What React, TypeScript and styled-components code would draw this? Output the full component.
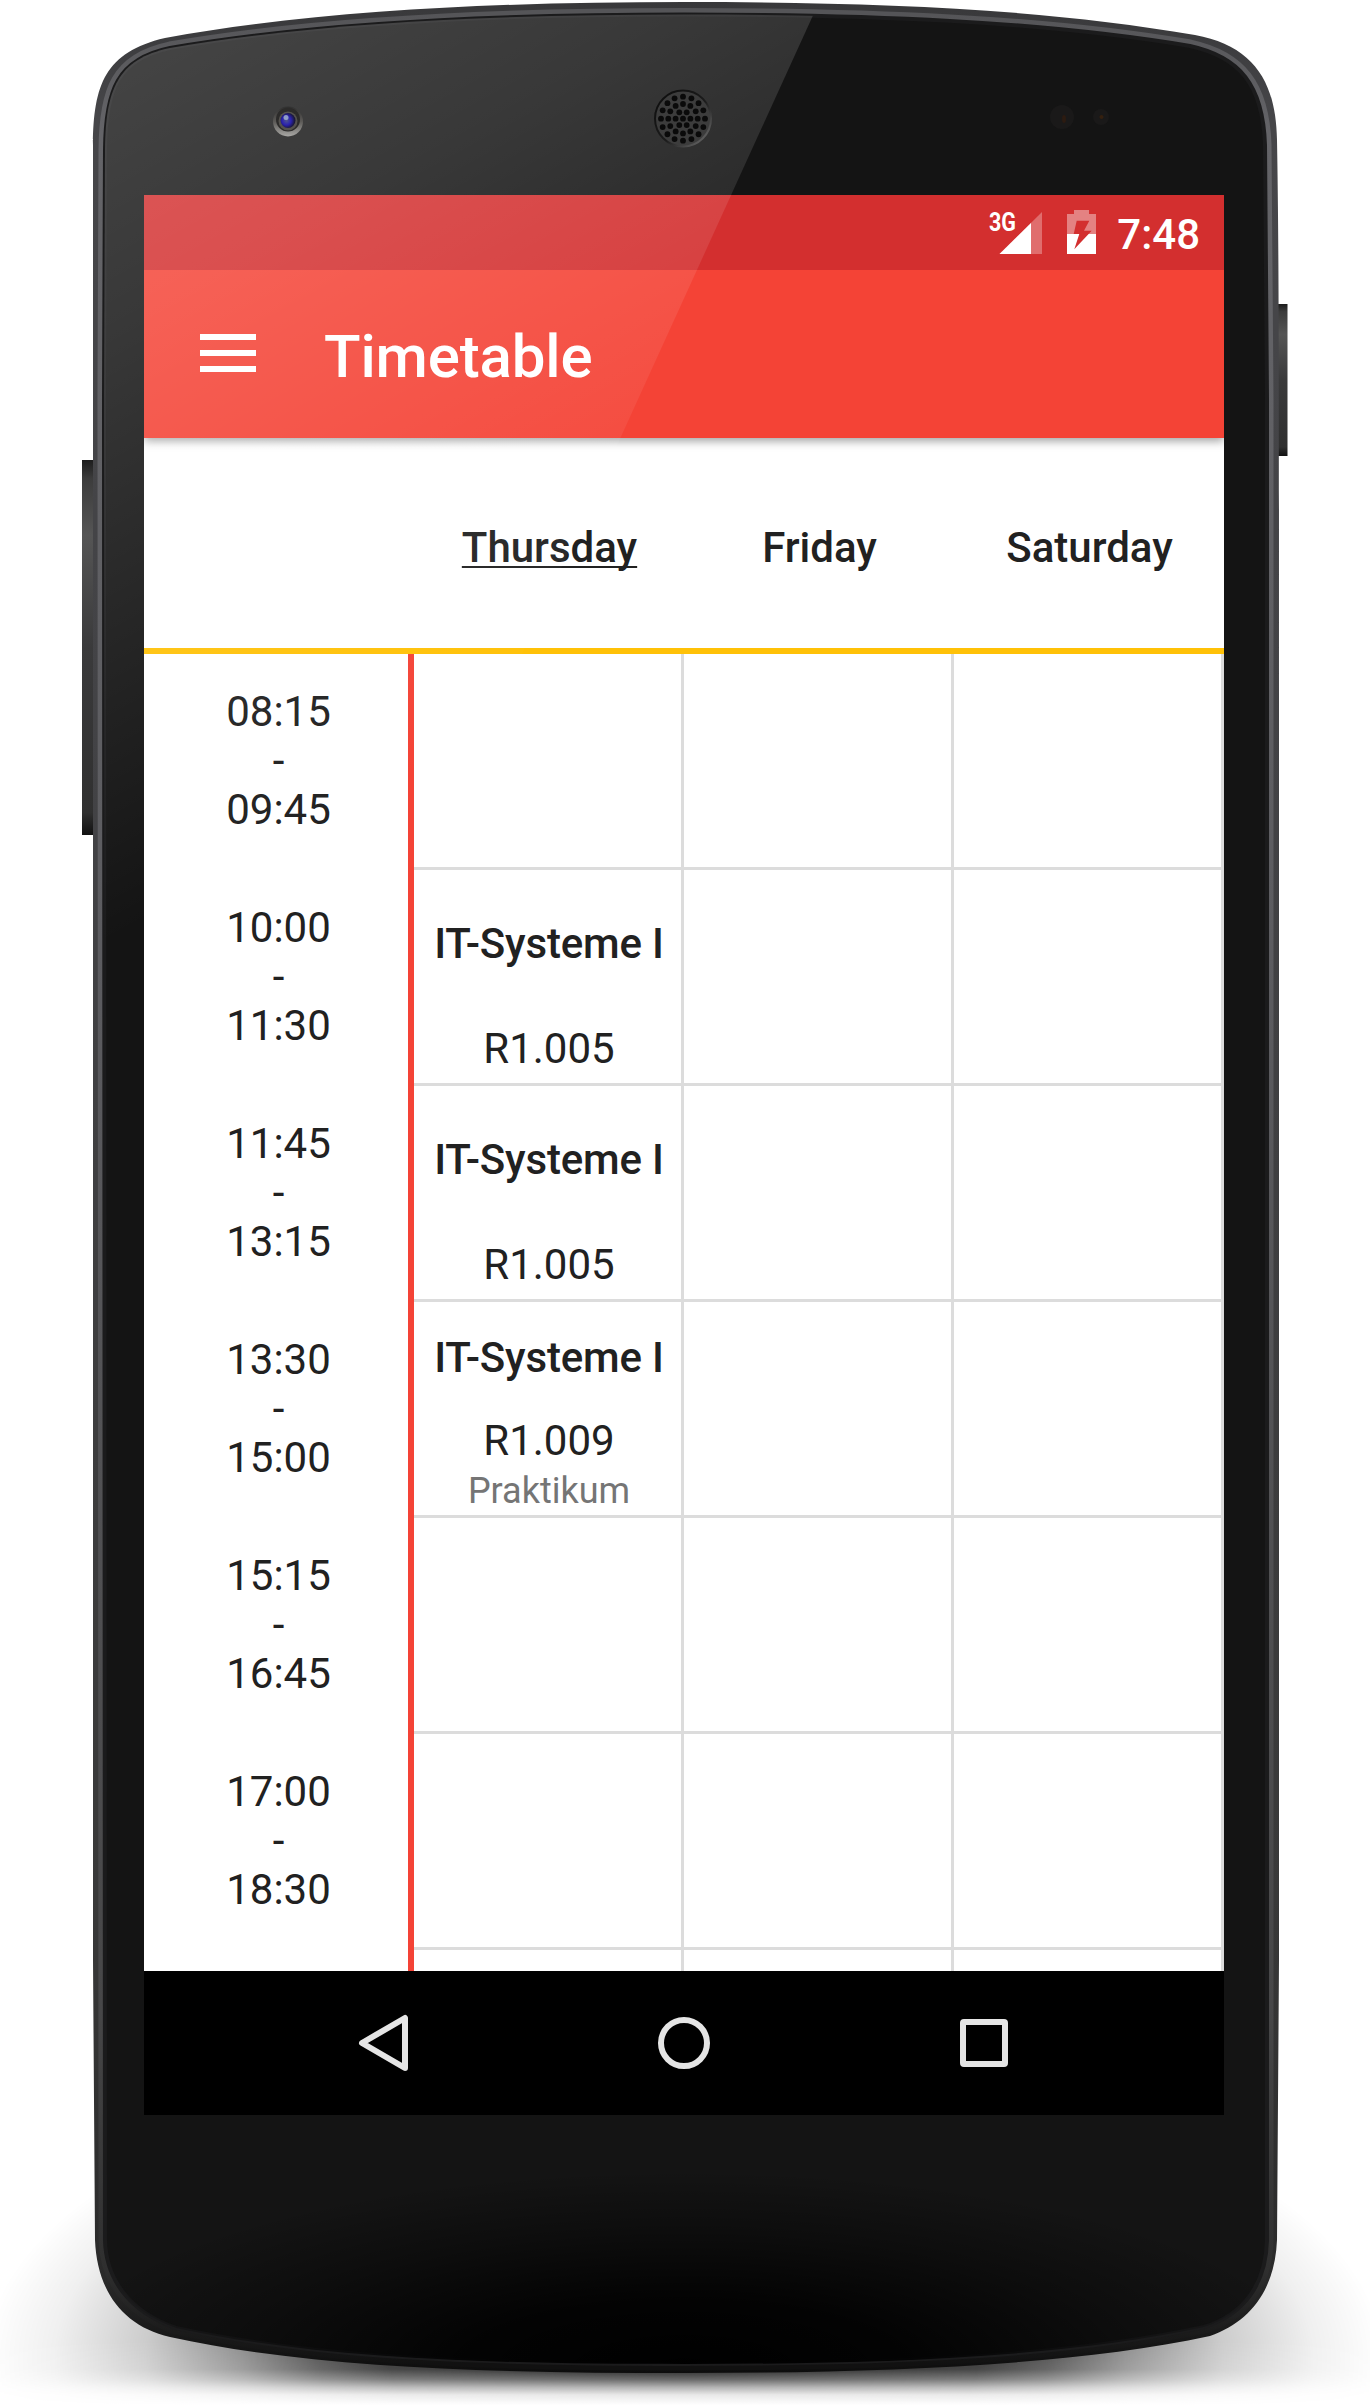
import React from "react";
import styled, { createGlobalStyle } from "styled-components";

const Global = createGlobalStyle`
  body { margin: 0; background: #fff; }
  * { box-sizing: border-box; }
`;

const Stage = styled.main`
  position: relative;
  width: 1370px;
  height: 2405px;
  overflow: hidden;
  padding: 195px 146px 290px 144px;
  font-family: Roboto, "Liberation Sans", sans-serif;
  color: #212121;
`;

const Art = styled.svg<{ $top?: boolean }>`
  position: absolute;
  inset: 0;
  z-index: ${(p) => (p.$top ? 2 : 0)};
  pointer-events: none;
`;

const Screen = styled.section`
  position: relative;
  z-index: 1;
  width: 1080px;
  height: 1920px;
  display: flex;
  flex-direction: column;
  background: #fff;
  overflow: hidden;
`;

const StatusBar = styled.div`
  position: relative;
  z-index: 1;
  height: 75px;
  flex: none;
  display: flex;
  align-items: center;
  justify-content: flex-end;
  padding-right: 24px;
  background: #d32f2f;
  color: #fff;
`;

const StatusIcons = styled.svg`
  display: block;
  overflow: visible;
  margin-right: 19px;
`;

const Clock = styled.span`
  font-size: 42px;
  font-weight: 500;
  line-height: 75px;
  padding-top: 4px;
`;

const Toolbar = styled.header`
  position: relative;
  height: 168px;
  flex: none;
  display: flex;
  align-items: center;
  padding-left: 56px;
  background: #f44336;
  box-shadow: 0 3px 9px rgba(0, 0, 0, 0.38);
`;

const Menu = styled.div`
  width: 56px;
  display: grid;
  gap: 10px;
  margin-top: -2px;
`;

const MenuBar = styled.i`
  height: 6px;
  background: #fff;
`;

const Title = styled.h1`
  margin: 5px 0 0 68px;
  font-size: 60px;
  font-weight: 500;
  line-height: 70px;
  letter-spacing: -0.15px;
  color: #fff;
`;

const DayRow = styled.div`
  height: 216px;
  flex: none;
  display: grid;
  grid-template-columns: 270px 270px 270px 270px;
  border-bottom: 6px solid #ffc107;
`;

const Day = styled.div<{ $current?: boolean }>`
  display: flex;
  align-items: center;
  justify-content: center;
  padding: 8px 0 0 1px;
  font-size: 42px;
  font-weight: 500;
  text-decoration: ${(p) => (p.$current ? "underline" : "none")};
  text-decoration-thickness: 2px;
  text-underline-offset: 4px;
  text-decoration-skip-ink: none;
`;

const Rows = styled.div`
  flex: 1;
  min-height: 0;
  overflow: hidden;
`;

const Row = styled.div`
  height: 216px;
  display: grid;
  grid-template-columns: 270px 270px 270px 270px;
`;

const Time = styled.div`
  border-right: 6px solid #f44336;
  padding: 33px 0 0 5px;
  font-size: 42px;
  line-height: 49px;
  text-align: center;
`;

const Cell = styled.div`
  display: flex;
  flex-direction: column;
  align-items: center;
  padding-left: 3px;
  border-right: 3px solid #dcdcdc;
  border-bottom: 3px solid #dcdcdc;
  white-space: nowrap;
  font-size: 42px;
  line-height: 49px;
`;

const Course = styled.strong<{ $compact: boolean }>`
  font-weight: 500;
  letter-spacing: -0.17px;
  padding-top: ${(p) => (p.$compact ? "31px" : "49px")};
`;

const Room = styled.span<{ $compact: boolean }>`
  padding-top: ${(p) => (p.$compact ? "34px" : "56px")};
`;

const Kind = styled.span`
  font-size: 36px;
  line-height: 42px;
  margin-top: 5px;
  color: #757575;
`;

const NavBar = styled.nav`
  height: 144px;
  flex: none;
  display: flex;
  align-items: center;
  justify-content: center;
  background: #000;
`;

type Lesson = { course: string; room: string; kind?: string };

const slots: { from: string; to: string; lesson?: Lesson }[] = [
  { from: "08:15", to: "09:45" },
  { from: "10:00", to: "11:30", lesson: { course: "IT-Systeme I", room: "R1.005" } },
  { from: "11:45", to: "13:15", lesson: { course: "IT-Systeme I", room: "R1.005" } },
  { from: "13:30", to: "15:00", lesson: { course: "IT-Systeme I", room: "R1.009", kind: "Praktikum" } },
  { from: "15:15", to: "16:45" },
  { from: "17:00", to: "18:30" },
  { from: "", to: "" },
];

const outer =
  "M93 145 C93.5 85 105 52 165 38 C320 10 500 2 684 2 C868 2 1040 8 1195 35 C1254 46 1276 82 1277 140 C1279 250 1279 400 1279 700 L1279 1960 L1277 2240 C1275 2290 1250 2322 1210 2336 C1070 2366 880 2373 684 2373 C490 2373 310 2368 170 2337 C122 2326 97 2290 95 2240 L93 1960 Z";
const inner =
  "M105 150 C105.500 90 117 59 170 48 C320 22 500 14.500 684 14.500 C868 14.500 1040 21 1190 46 C1240 57 1263 85 1265 145 L1267 400 L1267 2240 C1266 2285 1243 2315 1204 2327 C1060 2358 880 2364 684 2364 C490 2364 320 2359 176 2328 C130 2312 106 2280 105 2240 L104 400 Z";

const rings = [
  { n: 1, r: 0 },
  { n: 6, r: 7.4 },
  { n: 12, r: 14.7 },
  { n: 16, r: 22 },
];
const holes = rings.flatMap(({ n, r }) =>
  Array.from({ length: n }, (_, i) => {
    const t = (i * Math.PI * 2) / n;
    return { x: 683 + r * Math.cos(t), y: 118.7 + r * Math.sin(t) };
  })
);

function PhoneBody() {
  return (
    <Art width="1370" height="2405" viewBox="0 0 1370 2405">
      <defs>
        <linearGradient id="rim" x1="0" y1="0" x2="0" y2="1">
          <stop offset="0" stopColor="#38383a" />
          <stop offset=".05" stopColor="#464649" />
          <stop offset=".3" stopColor="#434346" />
          <stop offset=".8" stopColor="#393939" />
          <stop offset=".96" stopColor="#2a2a2a" />
          <stop offset="1" stopColor="#0d0d0d" />
        </linearGradient>
        <linearGradient id="bevel" x1="0" y1="0" x2="0" y2="1">
          <stop offset="0" stopColor="#555558" />
          <stop offset=".05" stopColor="#646468" />
          <stop offset=".4" stopColor="#5c5c60" />
          <stop offset=".85" stopColor="#474748" />
          <stop offset=".96" stopColor="#2f2f2f" />
          <stop offset="1" stopColor="#111" />
        </linearGradient>
        <radialGradient id="chin" gradientUnits="userSpaceOnUse" cx="0" cy="0" r="1" gradientTransform="translate(684 2370) scale(640 200)">
          <stop offset="0" stopColor="#000" />
          <stop offset=".35" stopColor="#000" stopOpacity=".85" />
          <stop offset=".7" stopColor="#000" stopOpacity=".35" />
          <stop offset="1" stopColor="#000" stopOpacity="0" />
        </radialGradient>
        <linearGradient id="key" x1="0" y1="0" x2="0" y2="1">
          <stop offset="0" stopColor="#1c1c1c" />
          <stop offset=".05" stopColor="#3c3c3c" />
          <stop offset=".2" stopColor="#555" />
          <stop offset=".5" stopColor="#3a3a3b" />
          <stop offset=".94" stopColor="#303030" />
          <stop offset="1" stopColor="#111" />
        </linearGradient>
        <radialGradient id="floor" gradientUnits="userSpaceOnUse" cx="0" cy="0" r="1" gradientTransform="translate(684 2360) scale(700 310)">
          <stop offset="0" stopColor="#000" stopOpacity="1" />
          <stop offset=".42" stopColor="#000" stopOpacity=".85" />
          <stop offset=".52" stopColor="#000" stopOpacity=".7" />
          <stop offset=".63" stopColor="#000" stopOpacity=".45" />
          <stop offset=".77" stopColor="#000" stopOpacity=".2" />
          <stop offset=".9" stopColor="#000" stopOpacity=".06" />
          <stop offset="1" stopColor="#000" stopOpacity="0" />
        </radialGradient>
        <linearGradient id="fade" gradientUnits="userSpaceOnUse" x1="0" y1="2150" x2="0" y2="2405">
          <stop offset="0" stopColor="#fff" />
          <stop offset=".75" stopColor="#fff" />
          <stop offset=".86" stopColor="#d8d8d8" />
          <stop offset=".9" stopColor="#999" />
          <stop offset=".93" stopColor="#505050" />
          <stop offset=".96" stopColor="#181818" />
          <stop offset="1" stopColor="#000" />
        </linearGradient>
        <mask id="floorMask" maskUnits="userSpaceOnUse" x="0" y="2040" width="1370" height="365">
          <rect y="2040" width="1370" height="365" fill="url(#fade)" />
        </mask>
      </defs>
      <rect y="2040" width="1370" height="365" fill="url(#floor)" mask="url(#floorMask)" />
      <rect x="82" y="460" width="14" height="375" fill="url(#key)" />
      <rect x="1276" y="304" width="11.500" height="152" fill="url(#key)" />
      <path d={outer} fill="url(#rim)" />
      <path d={inner} fill="none" stroke="url(#bevel)" strokeWidth="13" />
      <path d={inner} fill="#141414" stroke="#1b1b1c" strokeWidth="4" />
      <path d={inner} fill="url(#chin)" />
    </Art>
  );
}

function PhoneGloss() {
  return (
    <Art $top width="1370" height="2405" viewBox="0 0 1370 2405">
      <defs>
        <linearGradient id="gloss" gradientUnits="userSpaceOnUse" x1="150" y1="40" x2="520" y2="720">
          <stop offset="0" stopColor="#fff" stopOpacity=".205" />
          <stop offset=".3" stopColor="#fff" stopOpacity=".155" />
          <stop offset="1" stopColor="#fff" stopOpacity="0" />
        </linearGradient>
        <clipPath id="face">
          <path d={inner} />
        </clipPath>
        <radialGradient id="lens" cx=".4" cy=".5" r=".55">
          <stop offset="0" stopColor="#4f5590" />
          <stop offset=".55" stopColor="#2b22b0" />
          <stop offset="1" stopColor="#1a1838" />
        </radialGradient>
        <linearGradient id="ringShade" x1="0" y1="0" x2="0" y2="1">
          <stop offset="0" stopColor="#303030" />
          <stop offset=".5" stopColor="#5c5a57" />
          <stop offset="1" stopColor="#a9a8a5" />
        </linearGradient>
        <linearGradient id="lip" x1="0" y1="0" x2="1" y2="1">
          <stop offset="0" stopColor="#0c0c0c" />
          <stop offset=".55" stopColor="#1c1c1c" />
          <stop offset="1" stopColor="#777" />
        </linearGradient>
      </defs>
      <path d="M90 0 H820 L428 860 L90 1100 Z" fill="url(#gloss)" clipPath="url(#face)" />
      <circle cx="288" cy="121.500" r="15" fill="url(#ringShade)" />
      <circle cx="288" cy="119.500" r="12" fill="#2c2b2a" />
      <circle cx="288" cy="121" r="9.500" fill="#55524e" />
      <circle cx="288" cy="120.500" r="7.500" fill="url(#lens)" />
      <circle cx="286" cy="117.500" r="2.500" fill="#a7b9cf" opacity=".8" />
      <circle cx="683" cy="118.500" r="28" fill="#3c3c3c" stroke="url(#lip)" strokeWidth="2" />
      {holes.map((h, i) => (
        <circle key={i} cx={h.x} cy={h.y} r="2.900" fill="#0a0a0a" />
      ))}
      <circle cx="1062" cy="117" r="12" fill="#1a1919" />
      <ellipse cx="1064" cy="119" rx="2" ry="4" fill="#2c1b11" />
      <circle cx="1101" cy="117" r="8" fill="#1a1919" />
      <circle cx="1101.500" cy="117" r="2" fill="#35200f" />
    </Art>
  );
}

export default function App() {
  return (
    <Stage>
      <Global />
      <PhoneBody />
      <Screen>
        <StatusBar>
          <StatusIcons width="108" height="75" viewBox="0 0 108 75">
            <text x="-1" y="35.500" fill="#fff" fontFamily="Roboto" fontSize="26" fontWeight="700" textLength="27" lengthAdjust="spacingAndGlyphs">3G</text>
            <path d="M9.500 59 L52 17 V59 Z" fill="#fff" opacity=".3" />
            <path d="M9.500 59 L41 28 V59 Z" fill="#fff" />
            <path d="M77 19 H84 V15 H99 V19 H106 V39 H98.600 L101.700 35.700 H94 L99.300 25.700 H86.700 L83.700 39 H77 Z" fill="#fff" opacity=".4" />
            <path d="M77 39 H89.300 L84.300 54.300 L98.600 39 H106 V59 H77 Z" fill="#fff" />
          </StatusIcons>
          <Clock>7:48</Clock>
        </StatusBar>
        <Toolbar>
          <Menu><MenuBar /><MenuBar /><MenuBar /></Menu>
          <Title>Timetable</Title>
        </Toolbar>
        <DayRow>
          <Day />
          <Day $current>Thursday</Day>
          <Day>Friday</Day>
          <Day>Saturday</Day>
        </DayRow>
        <Rows>
          {slots.map((s, i) => (
            <Row key={i}>
              <Time>
                {s.from && (<><div>{s.from}</div><div>-</div><div>{s.to}</div></>)}
              </Time>
              <Cell>
                {s.lesson && (
                  <>
                    <Course $compact={!!s.lesson.kind}>{s.lesson.course}</Course>
                    <Room $compact={!!s.lesson.kind}>{s.lesson.room}</Room>
                    {s.lesson.kind && <Kind>{s.lesson.kind}</Kind>}
                  </>
                )}
              </Cell>
              <Cell />
              <Cell />
            </Row>
          ))}
        </Rows>
        <NavBar>
          <svg width="1080" height="144" viewBox="0 0 1080 144" fill="none" stroke="#e5e5e5" strokeWidth="6" strokeLinejoin="round">
            <path d="M261 47 V97 L218 72 Z" />
            <circle cx="540" cy="72" r="23" />
            <rect x="819" y="51" width="42" height="42" rx="1" />
          </svg>
        </NavBar>
      </Screen>
      <PhoneGloss />
    </Stage>
  );
}
